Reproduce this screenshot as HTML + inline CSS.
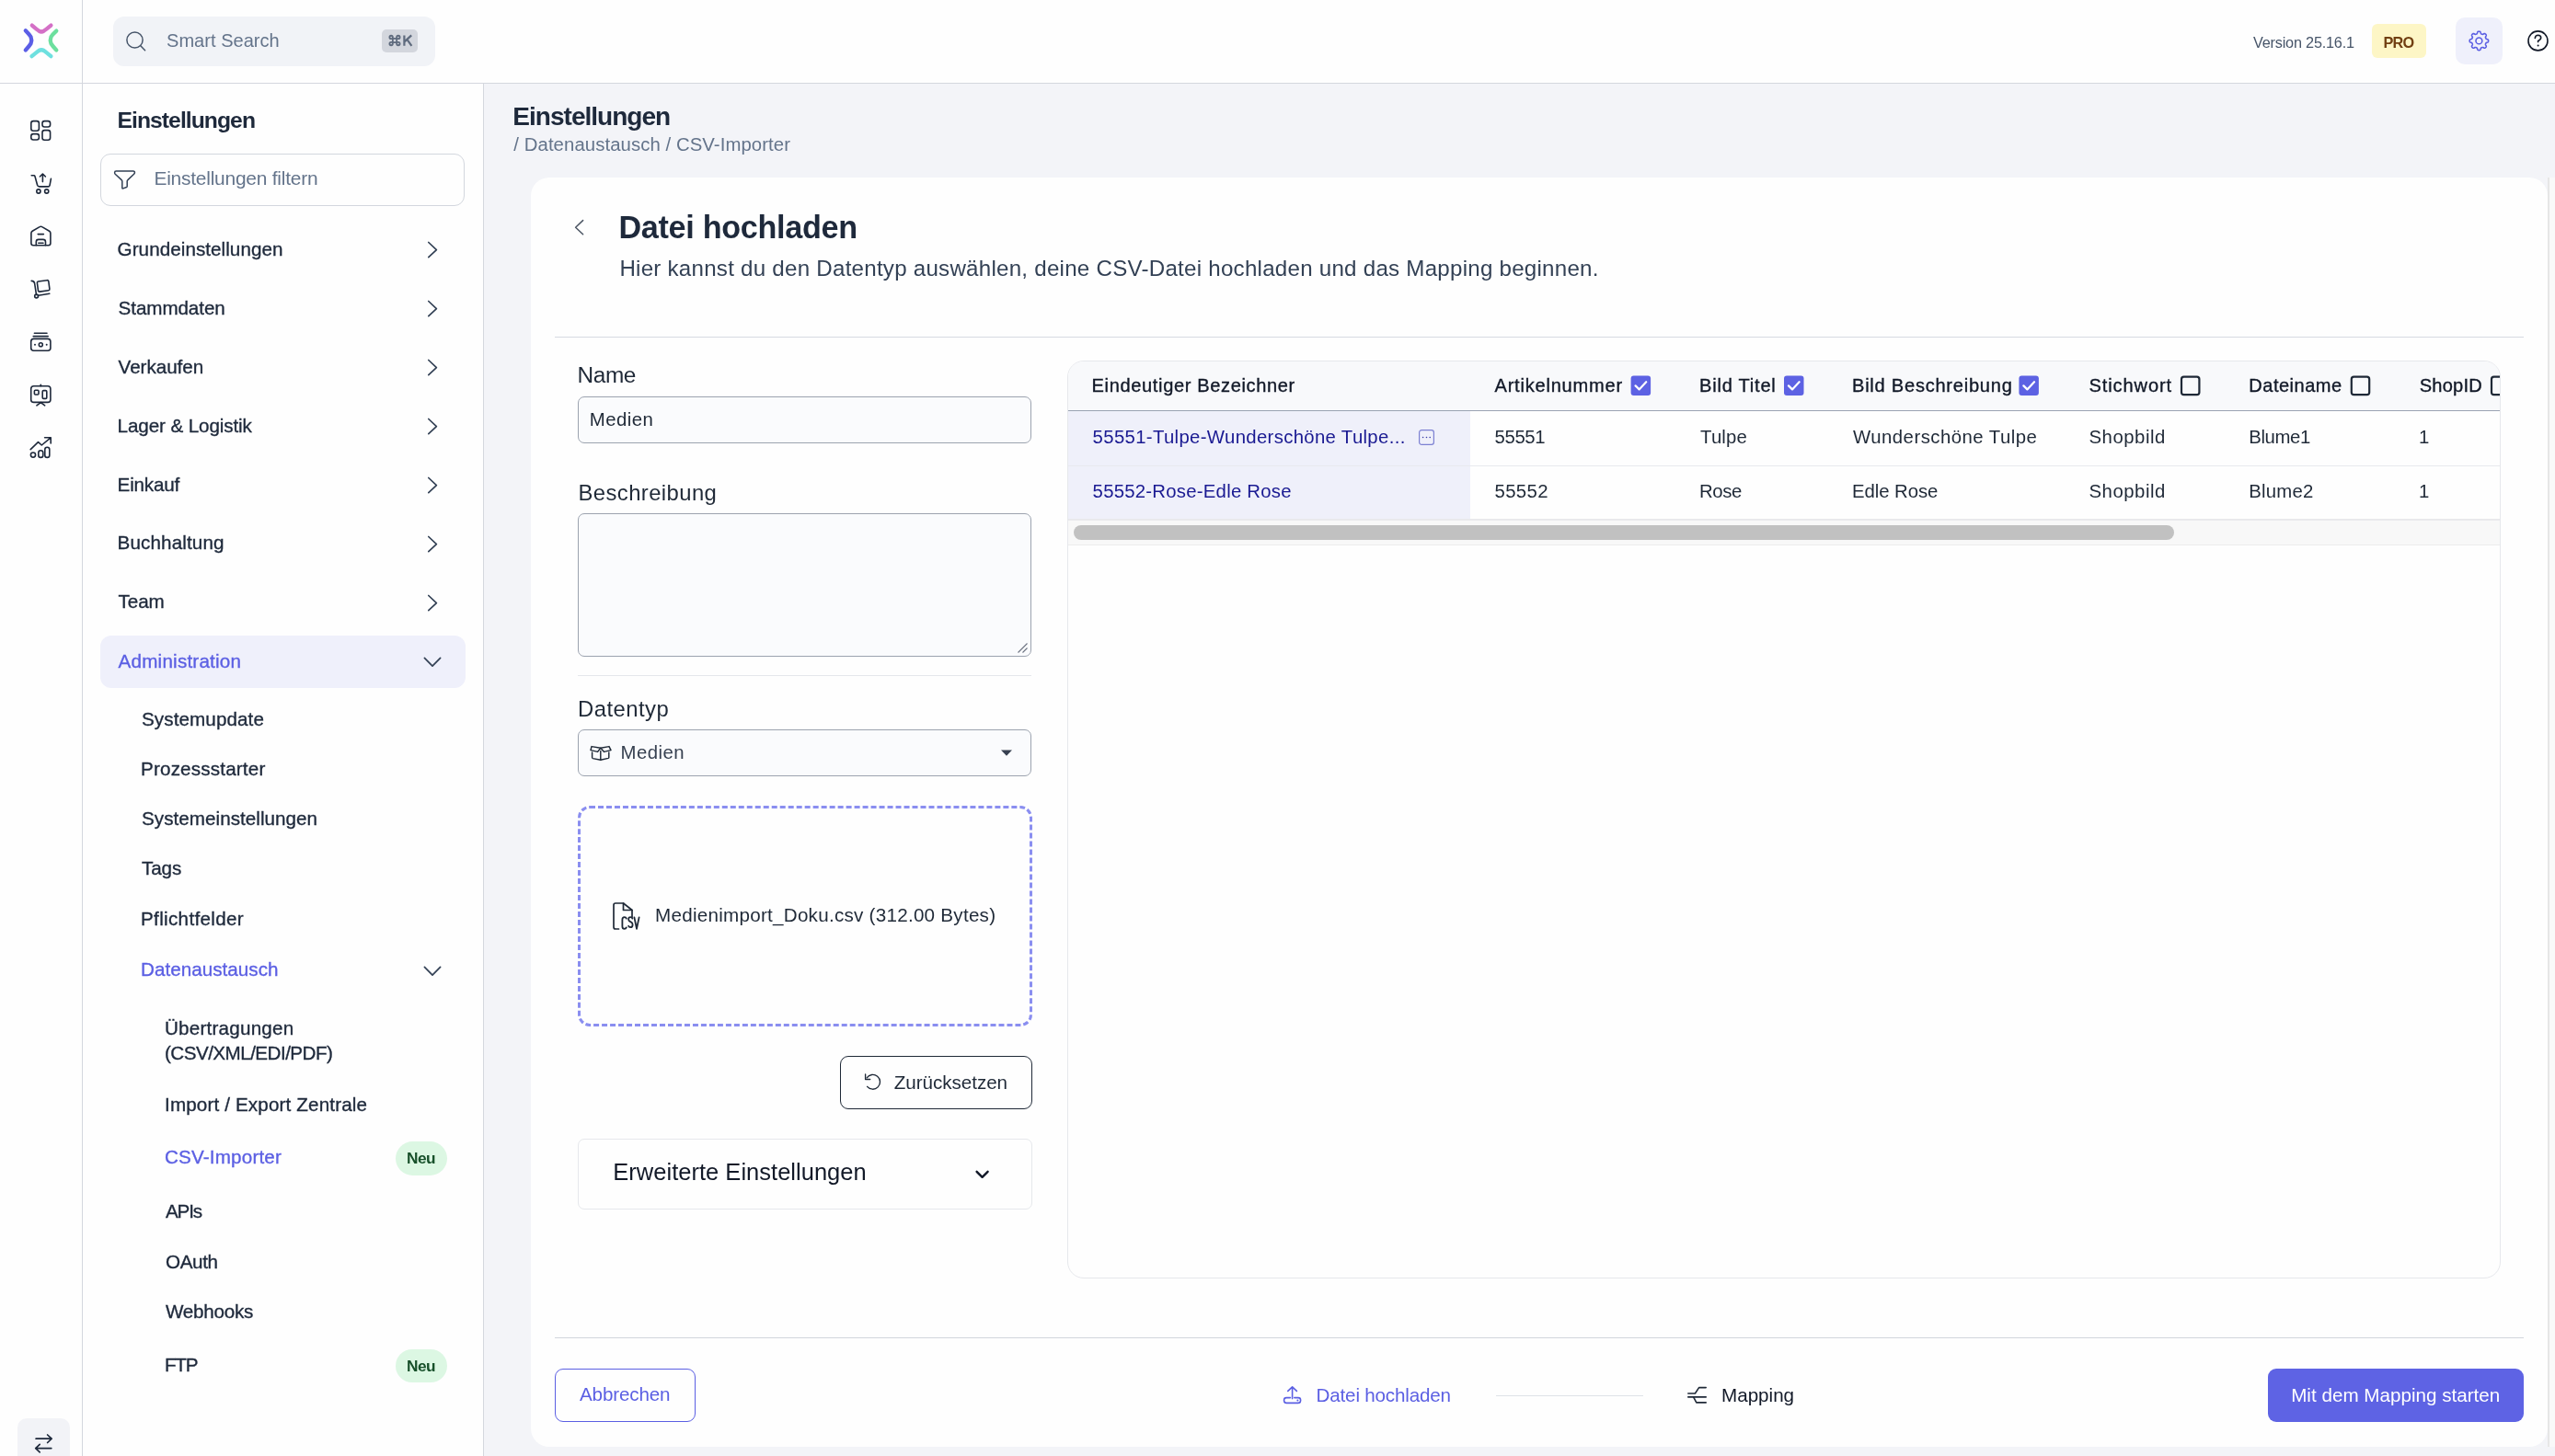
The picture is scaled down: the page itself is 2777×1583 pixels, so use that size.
<!DOCTYPE html>
<html><head><meta charset="utf-8"><title>CSV-Importer</title>
<style>
html,body{margin:0;padding:0;}
body{width:2777px;height:1583px;position:relative;overflow:hidden;background:#f3f4f8;font-family:"Liberation Sans",sans-serif;}
.t{position:absolute;white-space:nowrap;}
#tx{position:absolute;left:0;top:0;width:2777px;height:1583px;will-change:transform;}
.a{position:absolute;box-sizing:border-box;}
svg{position:absolute;overflow:visible;}
</style></head><body>
<!-- top bar -->
<div class="a" style="left:0;top:0;width:2777px;height:90px;background:#fefefe;"></div>
<div class="a" style="left:0;top:90px;width:2777px;height:1px;background:#d4d7de;"></div>
<!-- left rail -->
<div class="a" style="left:0;top:91px;width:89px;height:1492px;background:#fefefe;"></div>
<div class="a" style="left:89px;top:0;width:1px;height:1583px;background:#d4d7de;"></div>
<!-- settings sidebar -->
<div class="a" style="left:90px;top:91px;width:435px;height:1492px;background:#fefefe;"></div>
<div class="a" style="left:525px;top:91px;width:1px;height:1492px;background:#d4d7de;"></div>
<!-- logo -->
<svg style="left:0;top:0" width="90" height="90" viewBox="0 0 90 90">
  <g fill="none" stroke-width="4.3" stroke-linecap="round">
    <path d="M34.8 27.6 Q40 32 42.3 33.6 Q45 35.3 47.7 33.6 Q50 32 55.4 27.6" stroke="#d470c6"/>
    <path d="M34.5 61.2 Q40 56.5 42.3 55 Q45 53.5 47.7 55 Q50 56.5 55.4 61.2" stroke="#6ee0df"/>
    <path d="M27.8 33.2 Q32 37.5 33.5 40 Q35 43.7 33.5 47.4 Q32 50 27.8 54.4" stroke="#5b5ee6"/>
    <path d="M61.3 33.6 Q57 37.5 55.5 40 Q54 43.7 55.5 47.4 Q57 50 61.3 54.4" stroke="#6cdf9e"/>
  </g>
</svg>
<!-- search -->
<div class="a" style="left:123px;top:18px;width:350px;height:54px;background:#f1f3f7;border-radius:12px;"></div>
<svg style="left:130px;top:28px" width="36" height="36" viewBox="0 0 36 36">
  <circle cx="16.5" cy="15.5" r="8.6" fill="none" stroke="#475569" stroke-width="1.5"/>
  <path d="M22.8 21.8 L27.6 26.8" stroke="#475569" stroke-width="1.5" stroke-linecap="round"/>
</svg>
<div class="a" style="left:415px;top:32px;width:39px;height:25px;background:#d3d6dd;border-radius:5px;"></div>
<svg style="left:415px;top:32px" width="39" height="25" viewBox="0 0 39 25">
  <g fill="none" stroke="#5f6b7e" stroke-width="2.1" transform="translate(14 12) scale(0.86) translate(-12.9 -12.7)">
    <path d="M10.4 10.2 h5 v5 h-5 z"/>
    <path d="M10.4 10.2 v-1.6 a2 2 0 1 0 -2 2 h1.6 M15.4 10.2 v-1.6 a2 2 0 1 1 2 2 h-1.6 M10.4 15.2 v1.6 a2 2 0 1 1 -2 -2 h1.6 M15.4 15.2 v1.6 a2 2 0 1 0 2 -2 h-1.6"/>
  </g>
  <path d="M24.4 6.4 v11.4 M24.4 13.6 L32.2 6.4 M27.4 10.9 L32.4 17.8" fill="none" stroke="#5f6b7e" stroke-width="2.2"/>
</svg>
<!-- version / pro / settings / help -->
<div class="a" style="left:2578px;top:26px;width:59px;height:37px;background:#fdf6c6;border-radius:6px;"></div>
<div class="a" style="left:2669px;top:19px;width:51px;height:51px;background:#eff0fb;border-radius:10px;"></div>
<svg style="left:2669px;top:19px" width="51" height="51" viewBox="0 0 51 51">
  <g transform="translate(25.4 25.4)" fill="none" stroke="#5b5fe3" stroke-width="1.6" stroke-linejoin="round">
    <path d="M0.00 -10.20 L0.27 -10.19 L0.53 -10.17 L0.80 -10.12 L1.05 -10.03 L1.30 -9.87 L1.52 -9.59 L1.69 -9.14 L1.83 -8.61 L1.96 -8.16 L2.11 -7.86 L2.28 -7.68 L2.46 -7.56 L2.64 -7.46 L2.83 -7.38 L3.02 -7.30 L3.21 -7.22 L3.41 -7.15 L3.61 -7.08 L3.82 -7.04 L4.07 -7.05 L4.39 -7.16 L4.80 -7.38 L5.27 -7.66 L5.70 -7.85 L6.06 -7.90 L6.35 -7.84 L6.59 -7.72 L6.81 -7.57 L7.02 -7.40 L7.21 -7.21 L7.40 -7.02 L7.57 -6.81 L7.72 -6.59 L7.84 -6.35 L7.90 -6.06 L7.85 -5.70 L7.66 -5.27 L7.38 -4.80 L7.16 -4.39 L7.05 -4.07 L7.04 -3.82 L7.08 -3.61 L7.15 -3.41 L7.22 -3.21 L7.30 -3.02 L7.38 -2.83 L7.46 -2.64 L7.56 -2.46 L7.68 -2.28 L7.86 -2.11 L8.16 -1.96 L8.61 -1.83 L9.14 -1.69 L9.59 -1.52 L9.87 -1.30 L10.03 -1.05 L10.12 -0.80 L10.17 -0.53 L10.19 -0.27 L10.20 -0.00 L10.19 0.27 L10.17 0.53 L10.12 0.80 L10.03 1.05 L9.87 1.30 L9.59 1.52 L9.14 1.69 L8.61 1.83 L8.16 1.96 L7.86 2.11 L7.68 2.28 L7.56 2.46 L7.46 2.64 L7.38 2.83 L7.30 3.02 L7.22 3.21 L7.15 3.41 L7.08 3.61 L7.04 3.82 L7.05 4.07 L7.16 4.39 L7.38 4.80 L7.66 5.27 L7.85 5.70 L7.90 6.06 L7.84 6.35 L7.72 6.59 L7.57 6.81 L7.40 7.02 L7.21 7.21 L7.02 7.40 L6.81 7.57 L6.59 7.72 L6.35 7.84 L6.06 7.90 L5.70 7.85 L5.27 7.66 L4.80 7.38 L4.39 7.16 L4.07 7.05 L3.82 7.04 L3.61 7.08 L3.41 7.15 L3.21 7.22 L3.02 7.30 L2.83 7.38 L2.64 7.46 L2.46 7.56 L2.28 7.68 L2.11 7.86 L1.96 8.16 L1.83 8.61 L1.69 9.14 L1.52 9.59 L1.30 9.87 L1.05 10.03 L0.80 10.12 L0.53 10.17 L0.27 10.19 L0.00 10.20 L-0.27 10.19 L-0.53 10.17 L-0.80 10.12 L-1.05 10.03 L-1.30 9.87 L-1.52 9.59 L-1.69 9.14 L-1.83 8.61 L-1.96 8.16 L-2.11 7.86 L-2.28 7.68 L-2.46 7.56 L-2.64 7.46 L-2.83 7.38 L-3.02 7.30 L-3.21 7.22 L-3.41 7.15 L-3.61 7.08 L-3.82 7.04 L-4.07 7.05 L-4.39 7.16 L-4.80 7.38 L-5.27 7.66 L-5.70 7.85 L-6.06 7.90 L-6.35 7.84 L-6.59 7.72 L-6.81 7.57 L-7.02 7.40 L-7.21 7.21 L-7.40 7.02 L-7.57 6.81 L-7.72 6.59 L-7.84 6.35 L-7.90 6.06 L-7.85 5.70 L-7.66 5.27 L-7.38 4.80 L-7.16 4.39 L-7.05 4.07 L-7.04 3.82 L-7.08 3.61 L-7.15 3.41 L-7.22 3.21 L-7.30 3.02 L-7.38 2.83 L-7.46 2.64 L-7.56 2.46 L-7.68 2.28 L-7.86 2.11 L-8.16 1.96 L-8.61 1.83 L-9.14 1.69 L-9.59 1.52 L-9.87 1.30 L-10.03 1.05 L-10.12 0.80 L-10.17 0.53 L-10.19 0.27 L-10.20 0.00 L-10.19 -0.27 L-10.17 -0.53 L-10.12 -0.80 L-10.03 -1.05 L-9.87 -1.30 L-9.59 -1.52 L-9.14 -1.69 L-8.61 -1.83 L-8.16 -1.96 L-7.86 -2.11 L-7.68 -2.28 L-7.56 -2.46 L-7.46 -2.64 L-7.38 -2.83 L-7.30 -3.02 L-7.22 -3.21 L-7.15 -3.41 L-7.08 -3.61 L-7.04 -3.82 L-7.05 -4.07 L-7.16 -4.39 L-7.38 -4.80 L-7.66 -5.27 L-7.85 -5.70 L-7.90 -6.06 L-7.84 -6.35 L-7.72 -6.59 L-7.57 -6.81 L-7.40 -7.02 L-7.21 -7.21 L-7.02 -7.40 L-6.81 -7.57 L-6.59 -7.72 L-6.35 -7.84 L-6.06 -7.90 L-5.70 -7.85 L-5.27 -7.66 L-4.80 -7.38 L-4.39 -7.16 L-4.07 -7.05 L-3.82 -7.04 L-3.61 -7.08 L-3.41 -7.15 L-3.21 -7.22 L-3.02 -7.30 L-2.83 -7.38 L-2.64 -7.46 L-2.46 -7.56 L-2.28 -7.68 L-2.11 -7.86 L-1.96 -8.16 L-1.83 -8.61 L-1.69 -9.14 L-1.52 -9.59 L-1.30 -9.87 L-1.05 -10.03 L-0.80 -10.12 L-0.53 -10.17 L-0.27 -10.19 Z"/>
    <circle r="3.4"/>
  </g>
</svg>
<svg style="left:2740px;top:26px" width="37" height="37" viewBox="0 0 37 37">
  <circle cx="18.5" cy="18.4" r="10.5" fill="none" stroke="#111827" stroke-width="1.6"/>
  <path d="M15.3 15.5 Q15.6 12.3 18.6 12.3 Q21.7 12.4 21.7 15.1 Q21.7 17.2 18.6 18.6 L18.6 19.6" fill="none" stroke="#111827" stroke-width="1.6" stroke-linecap="round"/>
  <circle cx="18.6" cy="23.6" r="1" fill="#111827"/>
</svg>

<!-- rail icons -->
<svg style="left:0;top:100px" width="89" height="420" viewBox="0 100 89 420">
  <g fill="none" stroke="#1e293b" stroke-width="1.6" stroke-linecap="round" stroke-linejoin="round">
    <!-- dashboard -->
    <rect x="33.8" y="131.6" width="8.6" height="10.6" rx="2.4"/>
    <rect x="46" y="131.6" width="8.6" height="6.4" rx="2.4"/>
    <rect x="33.8" y="145.6" width="8.6" height="6.4" rx="2.4"/>
    <rect x="46" y="141.6" width="8.6" height="10.6" rx="2.4"/>
    <!-- cart -->
    <path d="M34.2 190.8 h2.6 q0.9 0 1.2 0.9 l2.6 9.6 q0.5 1.6 2.2 1.6 h9.4 q1.6 0 1.9 -1.6 l1.3 -6.9"/>
    <circle cx="41.9" cy="208" r="2.1"/>
    <circle cx="50.7" cy="208" r="2.1"/>
    <path d="M46.4 197.6 v-8.6 M43.4 192 l3 -3 l3 3"/>
    <!-- warehouse -->
    <path d="M33.9 264.6 v-11 q0 -1.6 1.3 -2.4 l7.9 -4.6 q1.3 -0.8 2.6 0 l7.9 4.6 q1.3 0.8 1.3 2.4 v11 q0 2.2 -2.2 2.2 h-16.6 q-2.2 0 -2.2 -2.2 z"/>
    <path d="M41.2 254.6 h6.2"/>
    <path d="M39.3 266.6 v-3.6 q0 -2.6 2.6 -2.6 h5 q2.6 0 2.6 2.6 v3.6"/>
    <path d="M41.8 264.3 h5.2"/>
    <!-- dolly -->
    <path d="M34.2 305.4 q2.8 0 3.4 2.6 l1.9 12.4"/>
    <circle cx="39.6" cy="322" r="1.9"/>
    <path d="M41.6 321.3 l12.2 -2.1"/>
    <path d="M40.4 307.6 q-0.2 -1.4 1.2 -1.6 l9.6 -1.3 q1.4 -0.2 1.6 1.2 l1.1 8.2 q0.2 1.4 -1.2 1.6 l-9.6 1.4 q-1.4 0.2 -1.6 -1.2 z"/>
    <!-- money -->
    <path d="M37.4 362.2 h13.6 M36.2 365.6 h16"/>
    <rect x="33.7" y="368.4" width="21.2" height="12.8" rx="3"/>
    <circle cx="44.3" cy="374.7" r="2"/>
    <!-- board -->
    <rect x="33.7" y="419.8" width="21.2" height="17.6" rx="3"/>
    <path d="M44.3 418.2 v1.6"/>
    <rect x="37.4" y="424.2" width="4.6" height="4.8" rx="1"/>
    <rect x="46.2" y="424.6" width="4.6" height="8.8" rx="1.2"/>
    <path d="M44.3 437.6 l-4.4 3.2 M44.3 437.6 l4.4 3.2"/>
    <!-- chart -->
    <path d="M33.2 488.6 l8.3 -8 l3.8 3.4 l9.8 -8.2 M48.6 475.8 h6.6 v6.2"/>
    <circle cx="36" cy="494.6" r="2.6"/>
    <rect x="41.8" y="489.8" width="5" height="7.6" rx="2.5"/>
    <rect x="48.8" y="486.2" width="5" height="11.2" rx="2.5"/>
  </g>
  <g fill="#1e293b">
    <circle cx="38" cy="374.7" r="1"/>
    <circle cx="50.7" cy="374.7" r="1"/>
  </g>
</svg>
<!-- rail bottom swap button -->
<div class="a" style="left:19px;top:1542px;width:57px;height:60px;background:#f2f3f7;border-radius:10px;"></div>
<svg style="left:19px;top:1542px" width="57" height="41" viewBox="0 0 57 41">
  <g fill="none" stroke="#1e293b" stroke-width="1.7" stroke-linecap="round" stroke-linejoin="round">
    <path d="M20.1 22.2 h17 M32.6 18 l4.5 4.2 l-4.5 4.3"/>
    <path d="M36.8 32.6 h-17 M24.2 28.3 l-4.5 4.3 l4.5 4.2"/>
  </g>
</svg>
<!-- sidebar filter -->
<div class="a" style="left:109px;top:167px;width:396px;height:57px;border:1px solid #d3d7de;border-radius:11px;background:#fefefe;"></div>
<svg style="left:118px;top:180px" width="34" height="32" viewBox="0 0 34 32">
  <path d="M8.2 6.1 H26.8 Q28.6 6.1 28.4 7.8 Q28.2 8.6 27.6 9.2 L20.9 15.6 Q20.2 16.2 20.2 17 V22.4 Q20.2 23.2 19.5 23.5 L15.8 24.9 Q14.8 25.2 14.8 24.2 V17 Q14.8 16.2 14.1 15.6 L7.2 9.2 Q6.6 8.6 6.6 7.8 Q6.6 6.1 8.2 6.1 Z" fill="none" stroke="#334155" stroke-width="1.5" stroke-linejoin="round"/>
</svg>
<!-- admin highlight -->
<div class="a" style="left:109px;top:691px;width:397px;height:57px;background:#eff0fb;border-radius:12px;"></div>
<!-- chevrons -->
<svg style="left:0;top:0" width="526" height="1583" viewBox="0 0 526 1583">
  <g fill="none" stroke="#334155" stroke-width="1.7" stroke-linecap="round" stroke-linejoin="round">
    <path d="M465.8 263.5 l8.6 8.05 l-8.6 8.05"/>
    <path d="M465.8 327.5 l8.6 8.05 l-8.6 8.05"/>
    <path d="M465.8 391.5 l8.6 8.05 l-8.6 8.05"/>
    <path d="M465.8 455.5 l8.6 8.05 l-8.6 8.05"/>
    <path d="M465.8 519.5 l8.6 8.05 l-8.6 8.05"/>
    <path d="M465.8 583.5 l8.6 8.05 l-8.6 8.05"/>
    <path d="M465.8 647.5 l8.6 8.05 l-8.6 8.05"/>
    <path d="M461.4 715.4 l8.6 8.8 l8.6 -8.8"/>
    <path d="M461.4 1051.4 l8.6 8.8 l8.6 -8.8"/>
  </g>
</svg>
<!-- neu badges -->
<div class="a" style="left:430px;top:1241px;width:56px;height:37px;background:#dcf7e3;border-radius:19px;"></div>
<div class="a" style="left:430px;top:1467px;width:56px;height:36px;background:#dcf7e3;border-radius:19px;"></div>

<!-- main card -->
<div class="a" style="left:577px;top:193px;width:2192px;height:1380px;background:#fefefe;border-radius:20px;"></div>
<div class="a" style="left:2769px;top:193px;width:8px;height:1380px;background:#f9f9f9;border-left:2px solid #e6e6e6;"></div>
<svg style="left:618px;top:232px" width="24" height="30" viewBox="0 0 24 30">
  <path d="M15.6 7.6 l-8 7.6 l8 7.6" fill="none" stroke="#4b5563" stroke-width="1.5" stroke-linecap="round" stroke-linejoin="round"/>
</svg>
<div class="a" style="left:603px;top:366px;width:2140px;height:1px;background:#d6dae1;"></div>
<!-- form -->
<div class="a" style="left:628px;top:431px;width:493px;height:51px;background:#fafbfd;border:1px solid #9ca3af;border-radius:7px;"></div>
<div class="a" style="left:628px;top:558px;width:493px;height:156px;background:#fafbfd;border:1px solid #9ca3af;border-radius:7px;"></div>
<svg style="left:1100px;top:693px" width="20" height="20" viewBox="0 0 20 20">
  <path d="M16.5 6.5 L6.5 16.5 M16.5 11.5 L11.5 16.5" stroke="#6b7280" stroke-width="1.1"/>
</svg>
<div class="a" style="left:628px;top:734px;width:493px;height:1px;background:#e5e7eb;"></div>
<div class="a" style="left:628px;top:793px;width:493px;height:51px;background:#fafbfd;border:1px solid #9ca3af;border-radius:7px;"></div>
<svg style="left:636px;top:804px" width="34" height="28" viewBox="0 0 34 28">
  <g fill="none" stroke="#1f2937" stroke-width="1.45" stroke-linejoin="round" stroke-linecap="round">
    <path d="M7 7.6 L16.8 9.2 L13.6 13.4 L6 11.6 Z"/>
    <path d="M16.8 9.2 L26 7.6 L28 11.6 L20.6 13.4 Z"/>
    <path d="M7.6 14 v5.6 q0 0.8 0.8 1 L16.8 22.2 L25 20.4 q0.8 -0.2 0.8 -1 v-5.4"/>
    <path d="M16.8 12.4 v9.8"/>
  </g>
</svg>
<svg style="left:1080px;top:808px" width="28" height="20" viewBox="0 0 28 20">
  <path d="M8 7.4 h12 l-6 6.4 z" fill="#374151"/>
</svg>
<!-- dropzone -->
<div class="a" style="left:628px;top:876px;width:494px;height:240px;border:3px dashed #8a8ef0;border-radius:13px;background:#fefefe;"></div>
<svg style="left:660px;top:976px" width="42" height="40" viewBox="0 0 42 40">
  <g fill="none" stroke="#1f2937" stroke-width="1.7" stroke-linejoin="round" stroke-linecap="round">
    <path d="M12.5 34 h-3.5 q-2 0 -2 -2 v-24 q0 -2 2 -2 h8.5 l9.5 7.5 v7.5"/>
    <path d="M17.5 6 v7.5 h9.5"/>
  </g>
  <g fill="none" stroke="#1f2937" stroke-width="1.8" stroke-linecap="round" stroke-linejoin="round">
    <path d="M20.8 22.6 q-0.5 -1.4 -2 -1.4 q-2.4 0 -2.4 2.6 v7.4 q0 2.6 2.4 2.6 q1.5 0 2 -1.4"/>
    <path d="M27.4 22.6 q-0.5 -1.4 -2 -1.4 q-2.3 0 -2.3 2.3 q0 1.7 2 2.6 l0.6 0.3 q1.9 0.9 1.9 2.8 q0 3 -2.4 3 q-1.6 0 -2.1 -1.4"/>
    <path d="M29.4 21.4 l2.6 12.4 l2.6 -12.4"/>
  </g>
</svg>
<!-- zuruecksetzen -->
<div class="a" style="left:913px;top:1148px;width:209px;height:58px;border:1.5px solid #1f2937;border-radius:9px;"></div>
<svg style="left:936px;top:1164px" width="26" height="26" viewBox="0 0 26 26">
  <g fill="none" stroke="#1f2937" stroke-width="1.35" stroke-linecap="round" stroke-linejoin="round">
    <path d="M6.13 7.77 A7.9 7.9 0 1 1 6.55 17.38"/>
    <path d="M4.6 4.0 v5.5 h5.1"/>
  </g>
</svg>
<!-- erweiterte -->
<div class="a" style="left:628px;top:1238px;width:494px;height:77px;border:1px solid #e6e8ec;border-radius:7px;background:#fefefe;"></div>
<svg style="left:1056px;top:1265.5px" width="24" height="24" viewBox="0 0 24 24">
  <path d="M5.6 7.8 l6 6 l6 -6" fill="none" stroke="#111827" stroke-width="2.4" stroke-linecap="round" stroke-linejoin="round"/>
</svg>
<!-- table -->
<div class="a" style="left:1160px;top:392px;width:1558px;height:998px;border:1px solid #e6e8ec;border-radius:18px;background:#fefefe;overflow:hidden;">
  <div class="a" style="left:0;top:0;width:1556px;height:54px;background:#f8f9fb;"></div>
  <div class="a" style="left:0;top:53px;width:1556px;height:1px;background:#9aa3b2;"></div>
  <div class="a" style="left:0;top:54px;width:437px;height:117px;background:#eff0fa;"></div>
  <div class="a" style="left:0;top:113px;width:1556px;height:1px;background:#e8e9ee;"></div>
  <div class="a" style="left:0;top:171px;width:1556px;height:2px;background:#e9e9ec;"></div>
  <div class="a" style="left:0;top:173px;width:1556px;height:26px;background:#f8f8f8;"></div>
  <div class="a" style="left:0;top:199px;width:1556px;height:1px;background:#ededed;"></div>
  <div class="a" style="left:6px;top:178px;width:1196px;height:16px;background:#c1c1c1;border-radius:8px;"></div>
</div>
<!-- checkboxes -->
<svg style="left:1160px;top:392px;overflow:hidden" width="1557" height="60" viewBox="1160 392 1557 60">
  <g>
    <rect x="1772.6" y="408.6" width="21.5" height="21.5" rx="3" fill="#5d62e3"/>
    <rect x="1939" y="408.6" width="21.5" height="21.5" rx="3" fill="#5d62e3"/>
    <rect x="2194.4" y="408.6" width="21.5" height="21.5" rx="3" fill="#5d62e3"/>
    <path d="M1777.6 419.4 l4 4 l7.6 -8.2 M1944 419.4 l4 4 l7.6 -8.2 M2199.4 419.4 l4 4 l7.6 -8.2" fill="none" stroke="#fff" stroke-width="2.2" stroke-linecap="round" stroke-linejoin="round"/>
    <g fill="none" stroke="#1f2937" stroke-width="2.2">
      <rect x="2371" y="409.7" width="19.4" height="19.4" rx="2.6"/>
      <rect x="2555.8" y="409.7" width="19.4" height="19.4" rx="2.6"/>
      <rect x="2708" y="409.7" width="19.4" height="19.4" rx="2.6"/>
    </g>
  </g>
</svg>
<svg style="left:1540px;top:465px" width="21" height="21" viewBox="0 0 21 21">
  <rect x="2.6" y="2.6" width="15.8" height="15.8" rx="2.6" fill="none" stroke="#7c80d2" stroke-width="1.2"/>
  <g fill="#3b3fa8"><circle cx="6.6" cy="10.5" r="0.8"/><circle cx="10.5" cy="10.5" r="0.8"/><circle cx="14.2" cy="10.5" r="0.8"/></g>
</svg>
<!-- footer -->
<div class="a" style="left:603px;top:1454px;width:2140px;height:1px;background:#d2d6dc;"></div>
<div class="a" style="left:603px;top:1488px;width:153px;height:58px;border:1.5px solid #5b5fe3;border-radius:9px;"></div>
<svg style="left:1390px;top:1502px" width="30" height="30" viewBox="1390 1502 30 30">
  <g fill="none" stroke="#5b5fe3" stroke-width="1.6" stroke-linecap="round" stroke-linejoin="round">
    <path d="M1404.6 1520.6 v-12.6 M1399.8 1512.4 l4.8 -4.6 l4.8 4.6"/>
    <path d="M1402.4 1519.6 h-4.2 q-2.6 0 -2.6 2.6 v0.6 q0 2.6 2.6 2.6 h12.8 q2.6 0 2.6 -2.6 v-0.6 q0 -2.6 -2.6 -2.6 h-4.2"/>
  </g>
  <circle cx="1410.4" cy="1522.5" r="1" fill="#5b5fe3"/>
</svg>
<div class="a" style="left:1626px;top:1517px;width:160px;height:1px;background:#dfe2e7;"></div>
<svg style="left:1828px;top:1502px" width="32" height="30" viewBox="1828 1502 32 30">
  <g fill="none" stroke="#1f2937" stroke-width="1.6" stroke-linecap="round" stroke-linejoin="round">
    <path d="M1854.2 1508.6 h-7.6 l-4.2 6.4 h-7.6"/>
    <path d="M1834.8 1518.9 h19.4"/>
    <path d="M1840.6 1518.9 l3.2 6 h10.4"/>
  </g>
</svg>
<div class="a" style="left:2465px;top:1488px;width:278px;height:58px;background:#5e63e4;border-radius:9px;"></div>

<div id="tx">
<div class="t" style="left:181.00px;top:34.02px;font-size:20.06px;line-height:20.06px;letter-spacing:0.018px;color:#64748b;">Smart Search</div>
<div class="t" style="left:2449.00px;top:37.82px;font-size:16.28px;line-height:16.28px;letter-spacing:-0.214px;color:#475569;">Version 25.16.1</div>
<div class="t" style="left:2590.60px;top:37.82px;font-size:16.28px;line-height:16.28px;letter-spacing:-0.898px;color:#713f12;font-weight:700;">PRO</div>
<div class="t" style="left:127.50px;top:119.48px;font-size:24.71px;line-height:24.71px;letter-spacing:-0.956px;color:#1e293b;font-weight:700;">Einstellungen</div>
<div class="t" style="left:167.40px;top:184.28px;font-size:20.93px;line-height:20.93px;letter-spacing:-0.218px;color:#64748b;">Einstellungen filtern</div>
<div class="t" style="left:127.60px;top:260.52px;font-size:20.64px;line-height:20.64px;letter-spacing:0.058px;color:#1e293b;-webkit-text-stroke:0.35px #1e293b;">Grundeinstellungen</div>
<div class="t" style="left:128.60px;top:325.02px;font-size:20.64px;line-height:20.64px;letter-spacing:-0.085px;color:#1e293b;-webkit-text-stroke:0.35px #1e293b;">Stammdaten</div>
<div class="t" style="left:128.60px;top:388.77px;font-size:20.64px;line-height:20.64px;letter-spacing:-0.039px;color:#1e293b;-webkit-text-stroke:0.35px #1e293b;">Verkaufen</div>
<div class="t" style="left:127.60px;top:452.52px;font-size:20.64px;line-height:20.64px;letter-spacing:-0.106px;color:#1e293b;-webkit-text-stroke:0.35px #1e293b;">Lager &amp; Logistik</div>
<div class="t" style="left:127.60px;top:516.52px;font-size:20.64px;line-height:20.64px;letter-spacing:-0.194px;color:#1e293b;-webkit-text-stroke:0.35px #1e293b;">Einkauf</div>
<div class="t" style="left:127.60px;top:580.32px;font-size:20.64px;line-height:20.64px;letter-spacing:0.119px;color:#1e293b;-webkit-text-stroke:0.35px #1e293b;">Buchhaltung</div>
<div class="t" style="left:128.60px;top:644.42px;font-size:20.64px;line-height:20.64px;letter-spacing:-0.117px;color:#1e293b;-webkit-text-stroke:0.35px #1e293b;">Team</div>
<div class="t" style="left:128.60px;top:708.92px;font-size:20.64px;line-height:20.64px;letter-spacing:0.207px;color:#5b5fe3;-webkit-text-stroke:0.35px #5b5fe3;">Administration</div>
<div class="t" style="left:154.00px;top:771.72px;font-size:20.64px;line-height:20.64px;letter-spacing:0.093px;color:#1e293b;-webkit-text-stroke:0.35px #1e293b;">Systemupdate</div>
<div class="t" style="left:153.00px;top:825.82px;font-size:20.64px;line-height:20.64px;letter-spacing:0.178px;color:#1e293b;-webkit-text-stroke:0.35px #1e293b;">Prozessstarter</div>
<div class="t" style="left:154.00px;top:880.12px;font-size:20.64px;line-height:20.64px;letter-spacing:0.042px;color:#1e293b;-webkit-text-stroke:0.35px #1e293b;">Systemeinstellungen</div>
<div class="t" style="left:154.00px;top:934.42px;font-size:20.64px;line-height:20.64px;letter-spacing:-0.084px;color:#1e293b;-webkit-text-stroke:0.35px #1e293b;">Tags</div>
<div class="t" style="left:153.00px;top:988.92px;font-size:20.64px;line-height:20.64px;letter-spacing:0.326px;color:#1e293b;-webkit-text-stroke:0.35px #1e293b;">Pflichtfelder</div>
<div class="t" style="left:153.00px;top:1044.32px;font-size:20.64px;line-height:20.64px;letter-spacing:0.032px;color:#5b5fe3;-webkit-text-stroke:0.35px #5b5fe3;">Datenaustausch</div>
<div class="t" style="left:179.00px;top:1107.52px;font-size:20.64px;line-height:20.64px;letter-spacing:0.214px;color:#1e293b;-webkit-text-stroke:0.35px #1e293b;">Übertragungen</div>
<div class="t" style="left:179.00px;top:1135.02px;font-size:20.64px;line-height:20.64px;letter-spacing:-0.532px;color:#1e293b;-webkit-text-stroke:0.35px #1e293b;">(CSV/XML/EDI/PDF)</div>
<div class="t" style="left:179.00px;top:1190.52px;font-size:20.64px;line-height:20.64px;letter-spacing:0.145px;color:#1e293b;-webkit-text-stroke:0.35px #1e293b;">Import / Export Zentrale</div>
<div class="t" style="left:180.00px;top:1306.72px;font-size:20.64px;line-height:20.64px;letter-spacing:-1.148px;color:#1e293b;-webkit-text-stroke:0.35px #1e293b;">APIs</div>
<div class="t" style="left:180.00px;top:1361.52px;font-size:20.64px;line-height:20.64px;letter-spacing:-0.375px;color:#1e293b;-webkit-text-stroke:0.35px #1e293b;">OAuth</div>
<div class="t" style="left:180.00px;top:1415.52px;font-size:20.64px;line-height:20.64px;letter-spacing:-0.251px;color:#1e293b;-webkit-text-stroke:0.35px #1e293b;">Webhooks</div>
<div class="t" style="left:179.00px;top:1474.02px;font-size:20.64px;line-height:20.64px;letter-spacing:-1.249px;color:#1e293b;-webkit-text-stroke:0.35px #1e293b;">FTP</div>
<div class="t" style="left:179.00px;top:1248.22px;font-size:20.64px;line-height:20.64px;letter-spacing:0.176px;color:#5b5fe3;-webkit-text-stroke:0.35px #5b5fe3;">CSV-Importer</div>
<div class="t" style="left:441.90px;top:1250.55px;font-size:17.3px;line-height:17.3px;letter-spacing:-0.495px;color:#17502a;font-weight:700;">Neu</div>
<div class="t" style="left:441.90px;top:1476.55px;font-size:17.3px;line-height:17.3px;letter-spacing:-0.495px;color:#17502a;font-weight:700;">Neu</div>
<div class="t" style="left:557.30px;top:112.85px;font-size:28.05px;line-height:28.05px;letter-spacing:-0.996px;color:#1e293b;font-weight:700;">Einstellungen</div>
<div class="t" style="left:558.30px;top:146.77px;font-size:20.35px;line-height:20.35px;letter-spacing:0.072px;color:#64748b;">/ Datenaustausch / CSV-Importer</div>
<div class="t" style="left:672.40px;top:229.88px;font-size:34.16px;line-height:34.16px;letter-spacing:-0.296px;color:#1e293b;font-weight:700;">Datei hochladen</div>
<div class="t" style="left:673.40px;top:279.77px;font-size:24.13px;line-height:24.13px;letter-spacing:0.247px;color:#334155;">Hier kannst du den Datentyp auswählen, deine CSV-Datei hochladen und das Mapping beginnen.</div>
<div class="t" style="left:627.50px;top:395.52px;font-size:24.42px;line-height:24.42px;letter-spacing:-0.410px;color:#1f2937;">Name</div>
<div class="t" style="left:640.80px;top:445.77px;font-size:20.35px;line-height:20.35px;letter-spacing:0.458px;color:#1f2937;">Medien</div>
<div class="t" style="left:628.50px;top:524.02px;font-size:23.84px;line-height:23.84px;letter-spacing:0.422px;color:#1f2937;">Beschreibung</div>
<div class="t" style="left:628.00px;top:759.12px;font-size:23.84px;line-height:23.84px;letter-spacing:0.469px;color:#1f2937;">Datentyp</div>
<div class="t" style="left:674.50px;top:808.17px;font-size:20.35px;line-height:20.35px;letter-spacing:0.458px;color:#374151;">Medien</div>
<div class="t" style="left:712.00px;top:984.72px;font-size:20.64px;line-height:20.64px;letter-spacing:0.256px;color:#1f2937;">Medienimport_Doku.csv (312.00 Bytes)</div>
<div class="t" style="left:971.80px;top:1166.62px;font-size:20.64px;line-height:20.64px;letter-spacing:-0.048px;color:#1f2937;">Zurücksetzen</div>
<div class="t" style="left:666.30px;top:1262.46px;font-size:25.44px;line-height:25.44px;letter-spacing:0.045px;color:#111827;">Erweiterte Einstellungen</div>
<div class="t" style="left:1186.60px;top:409.32px;font-size:20.06px;line-height:20.06px;letter-spacing:0.638px;color:#111827;-webkit-text-stroke:0.35px #111827;">Eindeutiger Bezeichner</div>
<div class="t" style="left:1624.50px;top:409.32px;font-size:20.06px;line-height:20.06px;letter-spacing:0.780px;color:#111827;-webkit-text-stroke:0.35px #111827;">Artikelnummer</div>
<div class="t" style="left:1847.10px;top:409.32px;font-size:20.06px;line-height:20.06px;letter-spacing:0.770px;color:#111827;-webkit-text-stroke:0.35px #111827;">Bild Titel</div>
<div class="t" style="left:2013.00px;top:409.32px;font-size:20.06px;line-height:20.06px;letter-spacing:0.766px;color:#111827;-webkit-text-stroke:0.35px #111827;">Bild Beschreibung</div>
<div class="t" style="left:2270.50px;top:409.32px;font-size:20.06px;line-height:20.06px;letter-spacing:0.891px;color:#111827;-webkit-text-stroke:0.35px #111827;">Stichwort</div>
<div class="t" style="left:2444.30px;top:409.32px;font-size:20.06px;line-height:20.06px;letter-spacing:0.488px;color:#111827;-webkit-text-stroke:0.35px #111827;">Dateiname</div>
<div class="t" style="left:2629.80px;top:409.32px;font-size:20.06px;line-height:20.06px;letter-spacing:0.202px;color:#111827;-webkit-text-stroke:0.35px #111827;">ShopID</div>
<div class="t" style="left:1187.60px;top:464.87px;font-size:20.35px;line-height:20.35px;letter-spacing:0.331px;color:#1a1a92;">55551-Tulpe-Wunderschöne Tulpe...</div>
<div class="t" style="left:1187.60px;top:523.77px;font-size:20.35px;line-height:20.35px;letter-spacing:0.234px;color:#1a1a92;">55552-Rose-Edle Rose</div>
<div class="t" style="left:1624.50px;top:464.87px;font-size:20.35px;line-height:20.35px;letter-spacing:-0.364px;color:#1f2937;">55551</div>
<div class="t" style="left:1848.10px;top:464.87px;font-size:20.35px;line-height:20.35px;letter-spacing:0.120px;color:#1f2937;">Tulpe</div>
<div class="t" style="left:2014.00px;top:464.87px;font-size:20.35px;line-height:20.35px;letter-spacing:0.462px;color:#1f2937;">Wunderschöne Tulpe</div>
<div class="t" style="left:2270.50px;top:464.87px;font-size:20.35px;line-height:20.35px;letter-spacing:0.519px;color:#1f2937;">Shopbild</div>
<div class="t" style="left:2444.30px;top:464.87px;font-size:20.35px;line-height:20.35px;letter-spacing:-0.393px;color:#1f2937;">Blume1</div>
<div class="t" style="left:2629.00px;top:464.87px;font-size:20.35px;line-height:20.35px;letter-spacing:0.000px;color:#1f2937;">1</div>
<div class="t" style="left:1624.50px;top:523.77px;font-size:20.35px;line-height:20.35px;letter-spacing:0.361px;color:#1f2937;">55552</div>
<div class="t" style="left:1847.10px;top:523.77px;font-size:20.35px;line-height:20.35px;letter-spacing:-0.426px;color:#1f2937;">Rose</div>
<div class="t" style="left:2013.00px;top:523.77px;font-size:20.35px;line-height:20.35px;letter-spacing:-0.068px;color:#1f2937;">Edle Rose</div>
<div class="t" style="left:2270.50px;top:523.77px;font-size:20.35px;line-height:20.35px;letter-spacing:0.519px;color:#1f2937;">Shopbild</div>
<div class="t" style="left:2444.30px;top:523.77px;font-size:20.35px;line-height:20.35px;letter-spacing:0.207px;color:#1f2937;">Blume2</div>
<div class="t" style="left:2629.00px;top:523.77px;font-size:20.35px;line-height:20.35px;letter-spacing:0.000px;color:#1f2937;">1</div>
<div class="t" style="left:630.00px;top:1506.42px;font-size:20.64px;line-height:20.64px;letter-spacing:-0.161px;color:#5b5fe3;">Abbrechen</div>
<div class="t" style="left:1430.60px;top:1506.92px;font-size:20.64px;line-height:20.64px;letter-spacing:-0.193px;color:#5b5fe3;">Datei hochladen</div>
<div class="t" style="left:1871.00px;top:1506.92px;font-size:20.64px;line-height:20.64px;letter-spacing:-0.008px;color:#111827;">Mapping</div>
<div class="t" style="left:2490.20px;top:1506.52px;font-size:20.64px;line-height:20.64px;letter-spacing:0.004px;color:#ffffff;">Mit dem Mapping starten</div>
</div>
</body></html>
